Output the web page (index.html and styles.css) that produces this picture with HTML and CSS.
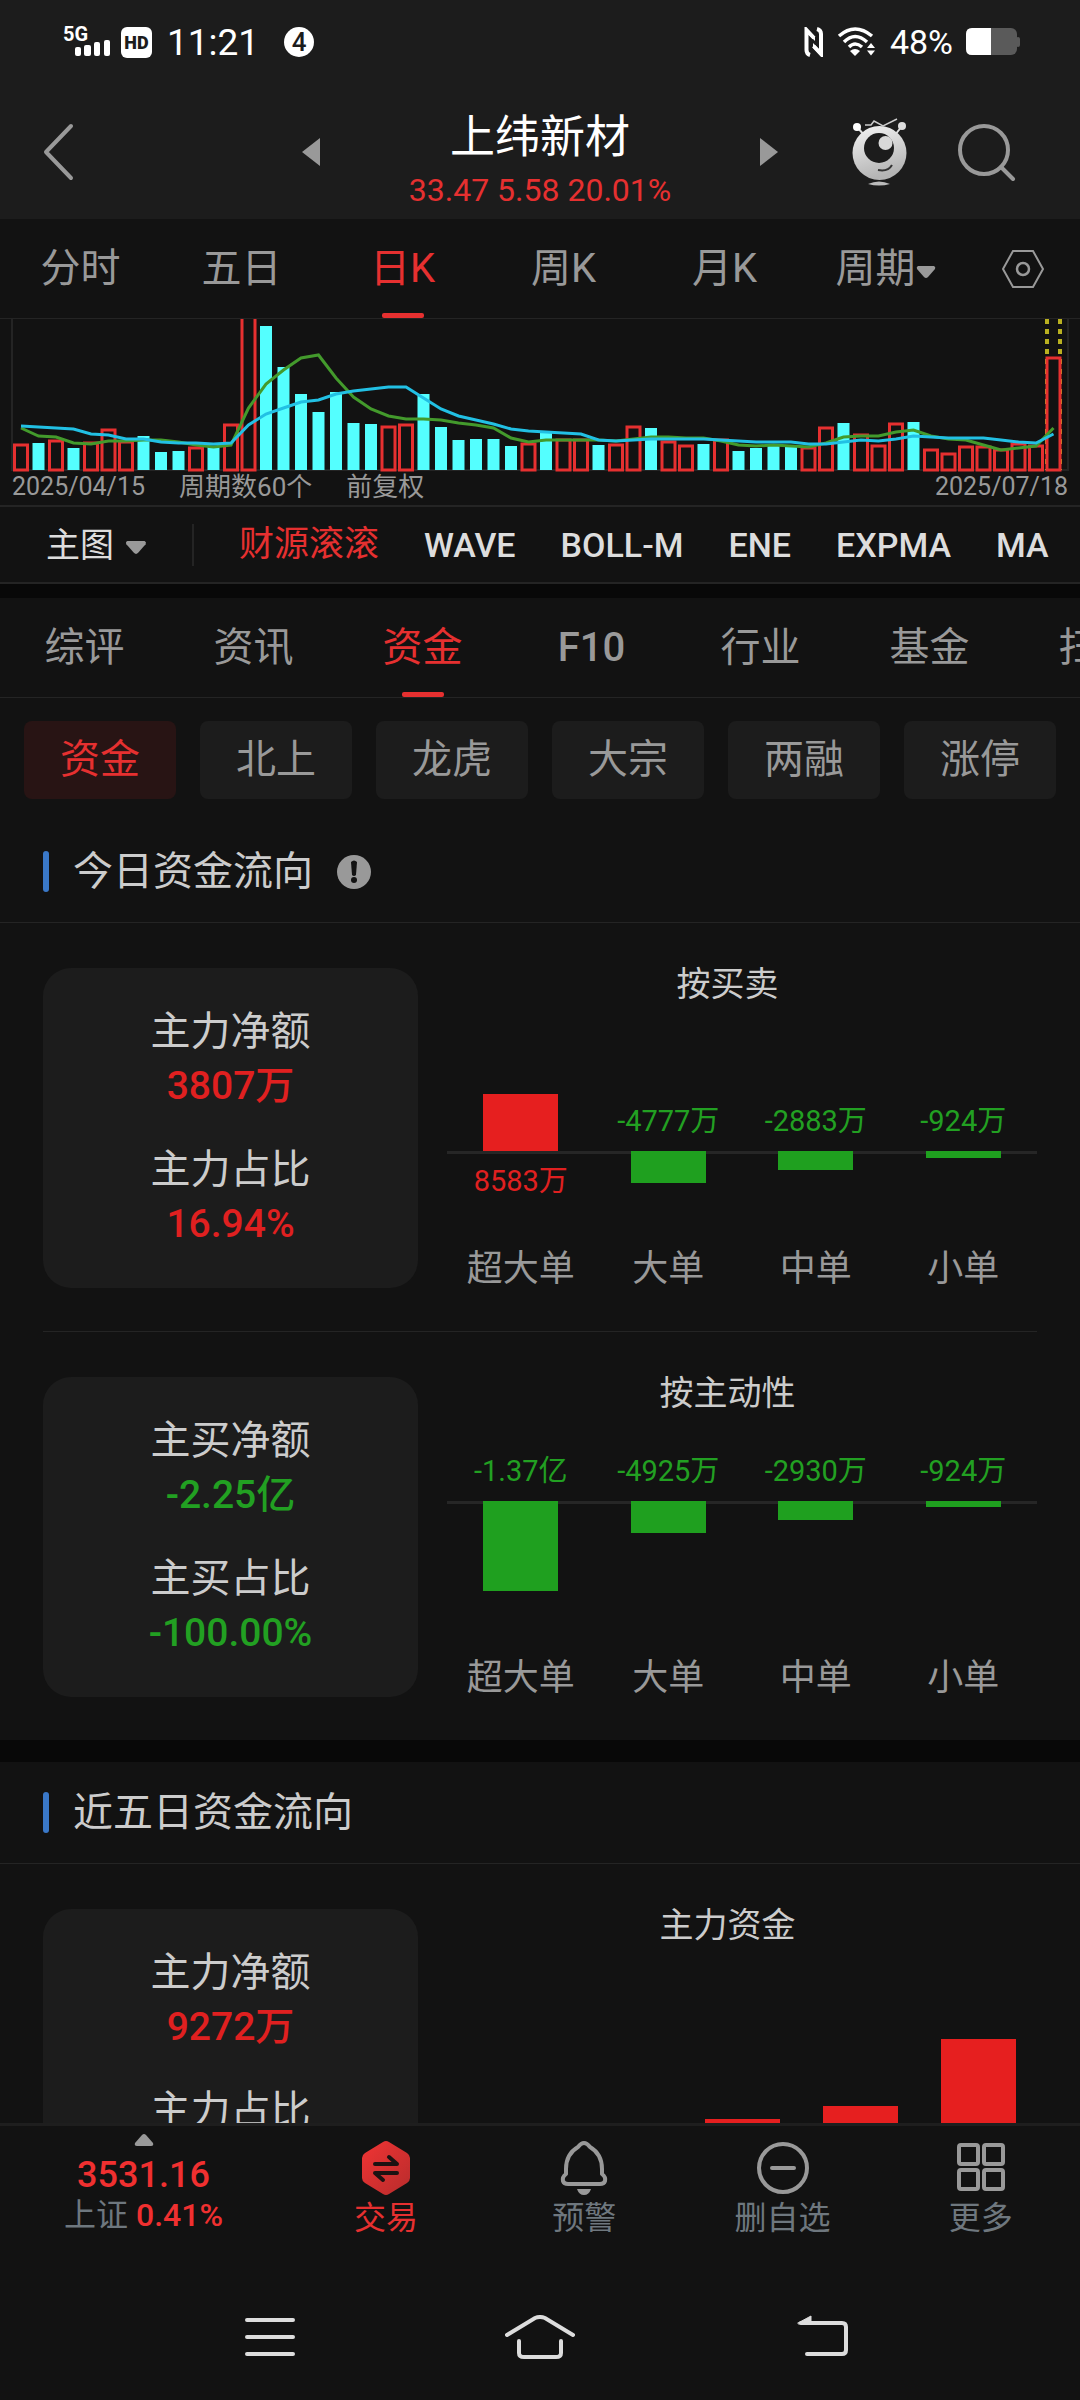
FILE: index.html
```html
<!DOCTYPE html>
<html lang="zh-CN">
<head>
    <meta charset="UTF-8">
    <meta name="viewport" content="width=device-width, initial-scale=1.0">
    <title>上纬新材</title>
    <link rel="stylesheet" href="styles.css">
</head>
<body>
    <header class="header">
        <!-- Status bar -->
        <div class="status-bar">
            <svg class="signal" width="48" height="34" viewBox="0 0 48 34">
                <text x="0" y="16" class="signal-text">5G</text>
                <rect x="12" y="22" width="6" height="9" rx="2"/>
                <rect x="21" y="20" width="7" height="11" rx="2"/>
                <rect x="31" y="17" width="6" height="14" rx="2"/>
                <rect x="41" y="15" width="6" height="16" rx="2"/>
            </svg>
            <span class="hd-badge">HD</span>
            <span class="time">11:21</span>
            <span class="notice-count">4</span>
            <div class="status-right">
                <svg width="20" height="30" viewBox="0 0 20 30" fill="none" stroke="#fff" stroke-width="4">
                    <path d="M6 28Q2.500 27 2.500 23V3L10 11"/>
                    <path d="M13 2Q17 3 17 7V27L9.500 19"/>
                    <path d="M2 1l9 9v4L5 8z" fill="#fff" stroke="none"/>
                    <path d="M17 29l-8-8v-5l6 6z" fill="#fff" stroke="none"/>
                </svg>
                <svg width="40" height="30" viewBox="0 0 40 30" fill="none" stroke="#fff" stroke-width="3.500">
                    <path d="M2 9Q18 -5 35 9"/>
                    <path d="M7 15Q18 4 30 15"/>
                    <path d="M12 20Q18 14 25 20"/>
                    <path d="M13 24Q18 20 23 24L18 29z" fill="#fff" stroke="none"/>
                    <path d="M30 21l4-5 4 5zM30 23.500h8l-4 5z" fill="#fff" stroke="none"/>
                </svg>
                <span class="battery-text">48%</span>
                <svg width="54" height="28" viewBox="0 0 54 28">
                    <rect x="0" y="0" width="51" height="27" rx="6" fill="#5a5a5a"/>
                    <rect x="50" y="9" width="4" height="10" rx="2" fill="#5a5a5a"/>
                    <path d="M6 0H25V27H6Q0 27 0 21V6Q0 0 6 0z" fill="#fff"/>
                </svg>
            </div>
        </div>

        <!-- Stock title -->
        <div class="title-bar">
            <button class="back-btn" aria-label="返回">
                <svg width="32" height="58" viewBox="0 0 32 58" fill="none" stroke="#999" stroke-width="4" stroke-linecap="round" stroke-linejoin="round">
                    <path d="M28 3L3 29l25 26"/>
                </svg>
            </button>
            <div class="stock">
                <button aria-label="上一只"><svg width="18" height="28" viewBox="0 0 18 28"><path d="M0 14L18 0v28z" fill="#999"/></svg></button>
                <div class="stock-name">
                    <h1>上纬新材</h1>
                    <p>33.47 5.58 20.01%</p>
                </div>
                <button aria-label="下一只"><svg width="18" height="28" viewBox="0 0 18 28"><path d="M18 14L0 0v28z" fill="#999"/></svg></button>
            </div>
            <div class="title-actions">
                <button aria-label="智能助手">
                    <svg width="56" height="70" viewBox="0 0 56 70">
                        <defs>
                            <linearGradient id="ball" x1="0" y1="0" x2="0.3" y2="1">
                                <stop offset="0" stop-color="#f4f4f4"/>
                                <stop offset="1" stop-color="#b4b4b4"/>
                            </linearGradient>
                        </defs>
                        <path d="M5 10l8 9M50 9l-7 9" stroke="#e0e0e0" stroke-width="2"/>
                        <circle cx="5" cy="10" r="4" fill="#fff"/>
                        <circle cx="50" cy="9" r="4" fill="#ddd"/>
                        <path d="M13 8h6l3-4 9 5 14-7" fill="none" stroke="#ccc" stroke-width="1.500"/>
                        <circle cx="27.500" cy="36" r="27" fill="url(#ball)"/>
                        <circle cx="27" cy="31" r="15" fill="#1c1c1c"/>
                        <circle cx="33.500" cy="26" r="7" fill="#d8d8d8"/>
                        <path d="M26 53Q36 55 40 48" fill="none" stroke="#333" stroke-width="2"/>
                        <path d="M16 67Q27 62 38 67Q27 70 16 67z" fill="#bbb"/>
                    </svg>
                </button>
                <button aria-label="搜索">
                    <svg width="58" height="58" viewBox="0 0 58 58" fill="none" stroke="#999" stroke-width="4" stroke-linecap="round">
                        <circle cx="26" cy="27" r="24"/>
                        <path d="M43 44l12 12"/>
                    </svg>
                </button>
            </div>
        </div>
    </header>

    <main class="content">
        <!-- K-line period tabs -->
        <nav class="period-tabs">
            <a href="#">分时</a>
            <a href="#">五日</a>
            <a href="#" class="active">日K</a>
            <a href="#">周K</a>
            <a href="#">月K</a>
            <a href="#">周期<svg class="caret" width="20" height="14" viewBox="0 0 20 14"><path d="M2 1h16q2 1 1 3l-7 8q-2 2-4 0l-7-8q-1-2 1-3z" fill="#999"/></svg></a>
            <button aria-label="设置">
                <svg width="42" height="38" viewBox="0 0 42 38" fill="none" stroke="#999" stroke-width="2">
                    <path d="M11 1h20l10 18-10 18H11L1 19z"/>
                    <circle cx="21" cy="19" r="6" stroke-width="2.500"/>
                </svg>
            </button>
        </nav>

        <!-- Volume chart, bars and lines are filled in by chart.js -->
        <svg class="volume-chart" id="volume" viewBox="0 0 1080 154" preserveAspectRatio="none"></svg>
        <div class="chart-footer">
            <span>2025/04/15</span>
            <span class="note">周期数60个</span>
            <span class="note">前复权</span>
            <span class="end-date">2025/07/18</span>
        </div>

        <div class="indicators">
            <button class="main-chart">主图<svg class="caret" width="22" height="15" viewBox="0 0 20 14"><path d="M2 1h16q2 1 1 3l-7 8q-2 2-4 0l-7-8q-1-2 1-3z" fill="#999"/></svg></button>
            <button class="active">财源滚滚</button>
            <button>WAVE</button>
            <button>BOLL-M</button>
            <button>ENE</button>
            <button>EXPMA</button>
            <button>MA</button>
        </div>

        <nav class="info-tabs">
            <a href="#">综评</a>
            <a href="#">资讯</a>
            <a href="#" class="active">资金</a>
            <a href="#" class="latin">F10</a>
            <a href="#">行业</a>
            <a href="#">基金</a>
            <a href="#">扫雷</a>
        </nav>

        <div class="chips">
            <button class="active">资金</button>
            <button>北上</button>
            <button>龙虎</button>
            <button>大宗</button>
            <button>两融</button>
            <button>涨停</button>
        </div>

        <!-- Today's money flow -->
        <section class="flow">
            <h2>今日资金流向
                <svg width="34" height="34" viewBox="0 0 34 34"><circle cx="17" cy="17" r="17" fill="#999"/><path d="M14 7q3-3 6 0l-1 13q-2 2-4 0z" fill="#121212"/><circle cx="17" cy="25" r="3" fill="#121212"/></svg>
            </h2>
            <div class="flow-row">
                <div class="card up">
                    <p>主力净额</p><strong>3807万</strong>
                    <p>主力占比</p><strong>16.94%</strong>
                </div>
                <div class="chart">
                    <h3>按买卖</h3>
                    <div class="plot plot-mid">
                        <div class="col up">
                            <div class="above"><i class="bar" style="height: 57px;"></i></div>
                            <div class="below"><span>8583万</span></div>
                        </div>
                        <div class="col down">
                            <div class="above"><span>-4777万</span></div>
                            <div class="below"><i class="bar" style="height: 32px;"></i></div>
                        </div>
                        <div class="col down">
                            <div class="above"><span>-2883万</span></div>
                            <div class="below"><i class="bar" style="height: 19px;"></i></div>
                        </div>
                        <div class="col down">
                            <div class="above"><span>-924万</span></div>
                            <div class="below"><i class="bar" style="height: 7px;"></i></div>
                        </div>
                    </div>
                    <div class="labels"><span>超大单</span><span>大单</span><span>中单</span><span>小单</span></div>
                </div>
            </div>
            <div class="flow-row">
                <div class="card down">
                    <p>主买净额</p><strong>-2.25亿</strong>
                    <p>主买占比</p><strong>-100.00%</strong>
                </div>
                <div class="chart">
                    <h3>按主动性</h3>
                    <div class="plot plot-high">
                        <div class="col down">
                            <div class="above"><span>-1.37亿</span></div>
                            <div class="below"><i class="bar" style="height: 90px;"></i></div>
                        </div>
                        <div class="col down">
                            <div class="above"><span>-4925万</span></div>
                            <div class="below"><i class="bar" style="height: 32px;"></i></div>
                        </div>
                        <div class="col down">
                            <div class="above"><span>-2930万</span></div>
                            <div class="below"><i class="bar" style="height: 19px;"></i></div>
                        </div>
                        <div class="col down">
                            <div class="above"><span>-924万</span></div>
                            <div class="below"><i class="bar" style="height: 6px;"></i></div>
                        </div>
                    </div>
                    <div class="labels"><span>超大单</span><span>大单</span><span>中单</span><span>小单</span></div>
                </div>
            </div>
        </section>

        <!-- Last five days -->
        <section class="flow">
            <h2>近五日资金流向</h2>
            <div class="flow-row">
                <div class="card up">
                    <p>主力净额</p><strong>9272万</strong>
                    <p>主力占比</p>
                </div>
                <div class="chart">
                    <h3>主力资金</h3>
                    <div class="plot plot-low">
                        <div class="col"><div class="above"></div></div>
                        <div class="col"><div class="above"></div></div>
                        <div class="col up"><div class="above"><i class="bar" style="height: 50px;"></i></div></div>
                        <div class="col up"><div class="above"><i class="bar" style="height: 63px;"></i></div></div>
                        <div class="col up"><div class="above"><i class="bar" style="height: 130px;"></i></div></div>
                    </div>
                </div>
            </div>
        </section>
    </main>

    <!-- Bottom toolbar -->
    <nav class="toolbar">
        <a href="#" class="index">
            <svg width="20" height="12" viewBox="0 0 20 12"><path d="M10 0q1 0 2 1l7 8q1 3-2 3H3q-3 0-2-3l7-8q1-1 2-1z" fill="#999"/></svg>
            <strong>3531.16</strong>
            <span>上证 <em>0.41%</em></span>
        </a>
        <a href="#" class="active">
            <svg width="56" height="56" viewBox="0 0 56 56">
                <defs>
                    <linearGradient id="hex" x1="0" y1="0" x2="1" y2="1">
                        <stop offset="0" stop-color="#f03434"/>
                        <stop offset="1" stop-color="#b82c2c"/>
                    </linearGradient>
                </defs>
                <path d="M25 2q3-2 6 0l18 11q3 2 3 5v20q0 3-3 5L31 54q-3 2-6 0L7 43q-3-2-3-5V18q0-3 3-5z" fill="url(#hex)"/>
                <path d="M17 24h22l-8-7M39 33H17l8 7" fill="none" stroke="#1c1212" stroke-width="4" stroke-linecap="round" stroke-linejoin="round"/>
            </svg>
            <span>交易</span>
        </a>
        <a href="#">
            <svg width="56" height="56" viewBox="0 0 56 56" fill="none" stroke="#999" stroke-width="4" stroke-linejoin="round">
                <path d="M22 7Q28 -1 34 7Q46 14 46 29V34Q50 37 49 41Q48 44 44 44H12Q8 44 7 41Q6 37 10 34V29Q10 14 22 7z"/>
                <path d="M21 49h14q-2 6-7 6t-7-6z" fill="#999" stroke="none"/>
            </svg>
            <span>预警</span>
        </a>
        <a href="#">
            <svg width="56" height="56" viewBox="0 0 56 56" fill="none" stroke="#999" stroke-width="4" stroke-linecap="round">
                <circle cx="28" cy="28" r="24"/>
                <path d="M17 28h22"/>
            </svg>
            <span>删自选</span>
        </a>
        <a href="#">
            <svg width="56" height="56" viewBox="0 0 56 56" fill="none" stroke="#999" stroke-width="4">
                <rect x="6" y="5" width="19" height="19" rx="2"/>
                <rect x="31" y="5" width="19" height="19" rx="2"/>
                <rect x="6" y="30" width="19" height="19" rx="2"/>
                <rect x="31" y="30" width="19" height="19" rx="2"/>
            </svg>
            <span>更多</span>
        </a>
    </nav>

    <!-- System keys -->
    <div class="system-bar">
        <button aria-label="最近任务">
            <svg width="63" height="44" viewBox="0 0 63 44" fill="none" stroke="#ddd" stroke-width="4" stroke-linecap="round">
                <path d="M15 5h46M15 22h46M15 39h46"/>
            </svg>
        </button>
        <button aria-label="主屏幕">
            <svg width="70" height="44" viewBox="0 0 70 44" fill="none" stroke="#ddd" stroke-width="4" stroke-linecap="round">
                <path d="M2 20L30 3q5-2 10 0l28 17M14 26v12q0 4 5 4h32q5 0 5-4V26"/>
            </svg>
        </button>
        <button aria-label="返回上级">
            <svg width="63" height="44" viewBox="0 0 63 44" fill="none" stroke="#ddd" stroke-width="4" stroke-linecap="round">
                <path d="M16 8h41q4 0 4 4v23q0 4-4 4H22"/>
                <path d="M13 8L26 1v8H14z" fill="#ddd" stroke-width="1"/>
            </svg>
        </button>
    </div>
    <script src="chart.js"></script>
</body>
</html>
```
FILE: styles.css
```css
* {
    box-sizing: border-box;
}

body {
    display: flex;
    flex-direction: column;
    height: 100vh;
    margin: 0;
    overflow: hidden;
    background: #121212;
    color: #999;
    font-family: Roboto, "Noto Sans CJK SC", sans-serif;
    font-size: 40px;
    line-height: 1;
}

h1, h2, h3, p {
    margin: 0;
    font-weight: 400;
}

strong {
    font-weight: 500;
}

em {
    font-style: normal;
    font-weight: 500;
}

a {
    color: inherit;
    text-decoration: none;
}

button {
    padding: 0;
    border: none;
    background: none;
    color: inherit;
    font: inherit;
}

svg {
    display: block;
}

/* Header */
.header {
    flex: none;
    background: #1c1c1c;
    color: #fff;
}

.status-bar {
    display: flex;
    align-items: center;
    height: 84px;
    padding: 0 60px 0 63px;
}

.signal {
    overflow: visible;
    fill: #fff;
}

.signal-text {
    font-size: 20px;
    font-weight: 700;
}

.hd-badge {
    margin: 0 15px 0 10px;
    width: 31px;
    border-radius: 6px;
    background: #fff;
    color: #1c1c1c;
    font-size: 18px;
    font-weight: 900;
    line-height: 31px;
    text-align: center;
}

.time {
    font-size: 37px;
}

.notice-count {
    margin-left: 25px;
    width: 30px;
    border-radius: 50%;
    background: #fff;
    color: #1c1c1c;
    font-size: 26px;
    font-weight: 500;
    line-height: 30px;
    text-align: center;
}

.status-right {
    display: flex;
    align-items: center;
    gap: 13px;
    margin-left: auto;
}

.battery-text {
    font-size: 34px;
}

.title-bar {
    display: grid;
    grid-template-columns: 302px 1fr 302px;
    align-items: center;
    height: 135px;
}

.back-btn {
    padding-left: 43px;
}

.stock {
    display: flex;
    align-items: center;
    justify-content: space-between;
}

.stock-name {
    padding-top: 20px;
    text-align: center;
}

.stock-name h1 {
    font-size: 45px;
    line-height: 56px;
}

.stock-name p {
    color: #e63030;
    font-size: 32px;
    line-height: 48px;
}

.title-actions {
    display: flex;
    align-items: center;
    justify-content: flex-end;
    gap: 50px;
    padding-right: 64px;
}

/* Main scroll area, cut off by the toolbar */
.content {
    flex: 1;
    min-height: 0;
    overflow: hidden;
}

.period-tabs {
    display: grid;
    grid-template-columns: repeat(6, 1fr) 114px;
    height: 100px;
    border-bottom: 1px solid #242424;
}

.period-tabs a,
.period-tabs button,
.info-tabs a {
    position: relative;
    display: flex;
    align-items: center;
    justify-content: center;
}

.period-tabs .active,
.info-tabs .active {
    color: #e63030;
}

.info-tabs .latin {
    font-weight: 500;
}

.caret {
    margin-top: 6px;
}

/* Underline of the selected tab */
.period-tabs .active::after,
.info-tabs .active::after {
    content: "";
    position: absolute;
    bottom: 0;
    width: 42px;
    height: 5px;
    border-radius: 2px;
    background: #e63030;
}

.volume-chart {
    width: 100%;
    height: 154px;
}

.volume-chart .frame {
    fill: none;
    stroke: #242424;
    stroke-width: 2;
}

.volume-chart .rise {
    fill: #121212;
    stroke: #e63030;
    stroke-width: 3;
}

.volume-chart .fall {
    fill: #54ffff;
}

.volume-chart .ma5 {
    fill: none;
    stroke: #439a2c;
    stroke-width: 3;
}

.volume-chart .ma10 {
    fill: none;
    stroke: #22c0e4;
    stroke-width: 3;
}

.volume-chart .limit {
    stroke: #b9b020;
    stroke-width: 4;
    stroke-dasharray: 5 5;
}

.chart-footer {
    display: flex;
    gap: 34px;
    height: 34px;
    padding: 0 12px;
    border-bottom: 2px solid #242424;
    font-size: 25px;
    line-height: 28px;
}

.chart-footer .note {
    font-size: 26px;
}

.end-date {
    margin-left: auto;
}

.indicators {
    display: flex;
    align-items: center;
    gap: 45px;
    height: 77px;
    padding-left: 46px;
    border-bottom: 2px solid #242424;
    overflow: hidden;
    color: #ddd;
    font-size: 34px;
    font-weight: 500;
    white-space: nowrap;
}

.indicators .active {
    color: #e63030;
    font-size: 35px;
    font-weight: 400;
}

.main-chart {
    display: flex;
    align-items: center;
    gap: 11px;
    width: 148px;
    height: 42px;
    border-right: 2px solid #242424;
}

.indicators .main-chart {
    font-weight: 400;
}

.info-tabs {
    display: flex;
    height: 114px;
    border-top: 14px solid #080808;
    border-bottom: 1px solid #242424;
    overflow: hidden;
}

.info-tabs a {
    flex: 0 0 169px;
}

.chips {
    display: grid;
    grid-template-columns: repeat(6, 1fr);
    gap: 24px;
    padding: 23px 24px 22px;
}

.chips button {
    height: 78px;
    border-radius: 8px;
    background: #1c1c1c;
}

.chips .active {
    background: #281414;
    color: #e63030;
}

/* Money flow sections */
.flow + .flow {
    border-top: 22px solid #080808;
}

.flow h2 {
    display: flex;
    align-items: center;
    gap: 24px;
    height: 102px;
    padding-left: 43px;
    border-bottom: 1px solid #242424;
    color: #ccc;
    font-size: 40px;
}

.flow h2::before {
    content: "";
    width: 6px;
    height: 41px;
    border-radius: 3px;
    background: #3a78c8;
}

.flow-row {
    display: grid;
    grid-template-columns: 375px 1fr;
    margin: 0 43px;
    padding: 45px 0 43px;
}

.flow-row + .flow-row {
    border-top: 1px solid #242424;
}

.card {
    display: flex;
    flex-direction: column;
    align-items: center;
    height: 320px;
    padding-top: 36px;
    border-radius: 28px;
    background: #1c1c1c;
    line-height: 55px;
}

.card p {
    color: #ccc;
}

.card strong {
    margin-bottom: 28px;
    font-size: 39px;
}

.card.up,
.col.up {
    color: #e02020;
}

.card.down,
.col.down {
    color: #22a022;
}

.chart h3 {
    color: #ccc;
    font-size: 34px;
    line-height: 32px;
    text-align: center;
}

.plot {
    display: flex;
    height: 250px;
    margin-left: 29px;
}

.col {
    flex: 1;
    font-size: 29px;
    line-height: 32px;
}

.above,
.below {
    display: flex;
    flex-direction: column;
    align-items: center;
}

.above {
    justify-content: flex-end;
}

.plot-mid .above {
    height: 151px;
}

.plot-high .above {
    height: 92px;
}

.plot-low .above {
    height: 228px;
}

.above span {
    margin-bottom: 14px;
}

.below {
    border-top: 3px solid #262626;
}

.below span {
    margin-top: 11px;
}

.bar {
    width: 75px;
    background: #e61f1f;
}

/* Negative bars start on top of the axis line */
.down .bar {
    margin-top: -3px;
    background: #1fa01f;
}

.labels {
    display: flex;
    margin-left: 29px;
    font-size: 36px;
    line-height: 38px;
    text-align: center;
}

.labels span {
    flex: 1;
}

/* Bottom toolbar */
.toolbar {
    display: grid;
    flex: none;
    grid-template-columns: 287px repeat(4, 1fr);
    height: 151px;
    border-top: 3px solid #1e1e1e;
    color: #6e777e;
    font-size: 32px;
}

.toolbar a {
    display: flex;
    flex-direction: column;
    align-items: center;
    padding-top: 14px;
    line-height: 44px;
}

.toolbar .active {
    color: #e63030;
}

.toolbar .index {
    padding-top: 8px;
    line-height: 40px;
}

.index strong {
    margin-top: 9px;
    color: #f03030;
    font-size: 36px;
    line-height: 40px;
}

.index em {
    color: #f03030;
}

.system-bar {
    display: flex;
    flex: none;
    align-items: center;
    justify-content: center;
    gap: 210px;
    height: 126px;
}
```
FILE: chart.js
```js
// Volume per day: positive = rising day, negative = falling day
const volumes = [
    25, -27, 29, -22, 27, 40, 28, -34, -18, -19, 22, -23, 45, 170, -144,
    -103, -76, -58, -78, -47, -46, 43, 45, -76, -43, -30, -31, -31, -24, 26,
    -37, 30, 30, -25, 25, 43, -42, 28, 24, -26, 30, -19, -22, -26, -23,
    22, 42, -47, 35, 24, 46, -48, 20, 16, 23, 23, 20, 26, 24, 112
];
const ma5 = [
    42, 34, 33, 27, 26, 29, 29, 30, 30, 28, 25, 23, 25, 62, 86,
    100, 112, 115, 92, 73, 61, 54, 51, 51, 50, 47, 45, 42, 32, 28,
    30, 30, 30, 30, 29, 31, 33, 33, 32, 32, 29, 25, 24, 25, 24,
    23, 27, 33, 34, 34, 38, 40, 34, 31, 30, 25, 20, 22, 24, 42
];
const ma10 = [
    44, 43, 42, 41, 36, 35, 31, 31, 28, 27, 27, 26, 27, 45, 56,
    62, 68, 70, 76, 79, 81, 83, 83, 72, 61, 54, 50, 46, 41, 39,
    38, 37, 36, 30, 29, 30, 31, 31, 31, 31, 30, 29, 28, 28, 28,
    26, 26, 28, 30, 29, 31, 34, 33, 32, 32, 32, 30, 28, 27, 36
];

const base = 151;
const x = i => 21 + i * 17.5;
const points = list => list.map((v, i) => x(i) + "," + (base - v)).join(" ");

let html = '<path class="frame" d="M12 0V151H1068V0"/>';
html += '<path class="limit" d="M1047 0V151M1060 0V151"/>';
volumes.forEach((v, i) => {
    if (v > 0) {
        html += `<rect class="rise" x="${x(i) - 6.5}" y="${base - v}" width="13" height="${v}"/>`;
    } else {
        html += `<rect class="fall" x="${x(i) - 6}" y="${base + v}" width="12" height="${-v}"/>`;
    }
});
html += `<polyline class="ma5" points="${points(ma5)}"/>`;
html += `<polyline class="ma10" points="${points(ma10)}"/>`;
document.getElementById("volume").innerHTML = html;
```
